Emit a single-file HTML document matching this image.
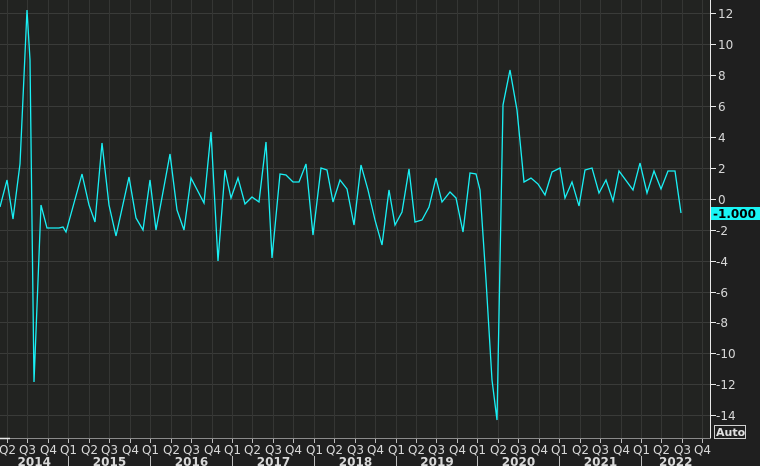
<!DOCTYPE html>
<html><head><meta charset="utf-8"><style>
html,body{margin:0;padding:0;background:#1f1f1f;}
svg{display:block}
text{font-family:"DejaVu Sans","Liberation Sans",sans-serif;}
</style></head><body>
<svg width="760" height="466" viewBox="0 0 760 466" xmlns="http://www.w3.org/2000/svg">
<rect x="0" y="0" width="760" height="466" fill="#1f1f1f"/>
<rect x="0" y="0" width="710" height="438" fill="#222321"/>
<g stroke="#3a3b39" stroke-width="1">
<line x1="0" y1="13.5" x2="710" y2="13.5"/><line x1="0" y1="44.5" x2="710" y2="44.5"/><line x1="0" y1="75.5" x2="710" y2="75.5"/><line x1="0" y1="106.5" x2="710" y2="106.5"/><line x1="0" y1="137.5" x2="710" y2="137.5"/><line x1="0" y1="168.5" x2="710" y2="168.5"/><line x1="0" y1="199.5" x2="710" y2="199.5"/><line x1="0" y1="230.5" x2="710" y2="230.5"/><line x1="0" y1="261.5" x2="710" y2="261.5"/><line x1="0" y1="292.5" x2="710" y2="292.5"/><line x1="0" y1="322.5" x2="710" y2="322.5"/><line x1="0" y1="353.5" x2="710" y2="353.5"/><line x1="0" y1="384.5" x2="710" y2="384.5"/><line x1="0" y1="415.5" x2="710" y2="415.5"/>
</g>
<g id="vg" stroke="#353634" stroke-width="1"></g>
<polyline fill="none" stroke="#19f0f5" stroke-width="1.3" stroke-linejoin="miter" points="0,207 7,180 13,219 20,164 27,10 30,60 34,382 41,205 47,228 59,228 63,227 66,232 82,174 89,205 95,222 102,143 109,205 116,236 129,177 136,218 143,230 150,180 156,230 170,154 177,210 184,230 191,178 204,203 211,132 218,261 225,170 231,198 238,178 245,204 252,197 259,202 266,142 272,258 280,174 286,175 293,182 299,182 306,164 313,235 321,168 327,170 333,202 340,180 347,189 354,225 361,165 368,190 375,220 382,245 389,190 395,225 402,212 409,169 415,222 422,220 429,207 436,178 442,202 450,192 456,198 463,232 470,173 476,174 480,190 486,280 492,380 497,420 503,105 510,70 517,110 524,182 531,178 538,184 545,195 552,172 560,168 565,198 572,182 579,206 585,170 592,168 599,193 606,180 613,201 619,171 633,190 640,163 647,193 654,171 661,189 668,171 675,171 681,213"/>
<line x1="710.5" y1="0" x2="710.5" y2="438" stroke="#e8e8e8" stroke-width="1"/>
<line x1="0" y1="438.5" x2="711" y2="438.5" stroke="#8a8a8a" stroke-width="1"/>
<line x1="0" y1="438.5" x2="10" y2="438.5" stroke="#e8e8e8" stroke-width="1.5"/>
<g stroke="#e8e8e8"><line x1="711" y1="13.5" x2="716" y2="13.5"/><line x1="711" y1="44.5" x2="716" y2="44.5"/><line x1="711" y1="75.5" x2="716" y2="75.5"/><line x1="711" y1="106.5" x2="716" y2="106.5"/><line x1="711" y1="137.5" x2="716" y2="137.5"/><line x1="711" y1="168.5" x2="716" y2="168.5"/><line x1="711" y1="199.5" x2="716" y2="199.5"/><line x1="711" y1="230.5" x2="716" y2="230.5"/><line x1="711" y1="261.5" x2="716" y2="261.5"/><line x1="711" y1="292.5" x2="716" y2="292.5"/><line x1="711" y1="322.5" x2="716" y2="322.5"/><line x1="711" y1="353.5" x2="716" y2="353.5"/><line x1="711" y1="384.5" x2="716" y2="384.5"/><line x1="711" y1="415.5" x2="716" y2="415.5"/></g>
<g fill="#d8d8d8" font-size="12">
<text x="718" y="18">12</text><text x="718" y="49">10</text><text x="718" y="80">8</text><text x="718" y="111">6</text><text x="718" y="142">4</text><text x="718" y="173">2</text><text x="718" y="204">0</text><text x="716" y="235">-2</text><text x="716" y="266">-4</text><text x="716" y="297">-6</text><text x="716" y="327">-8</text><text x="716" y="358">-10</text><text x="716" y="389">-12</text><text x="716" y="420">-14</text>
</g>
<rect x="711" y="207" width="49" height="13" fill="#19f5f5"/>
<text x="713" y="218" font-size="12" font-weight="bold" fill="#000">-1.000</text>
<rect x="714.5" y="425.5" width="31" height="13" fill="none" stroke="#d0d0d0"/>
<text x="716" y="436" font-size="11" font-weight="bold" fill="#e0e0e0">Auto</text>
<g id="qx" fill="#d8d8d8" font-size="12" text-anchor="middle"></g>
<g id="yx" fill="#d8d8d8" font-size="12" font-weight="bold" text-anchor="middle"></g>
<g id="sep" stroke="#bdbdbd"></g>
</svg>
<script>
var ns="http://www.w3.org/2000/svg";
function el(t,a,p,txt){var e=document.createElementNS(ns,t);for(var k in a)e.setAttribute(k,a[k]);if(txt)e.textContent=txt;document.getElementById(p).appendChild(e);}
var q=["Q2","Q3","Q4"];for(var y=0;y<8;y++)q.push("Q1","Q2","Q3","Q4");
for(var i=0;i<q.length;i++){var x=Math.round(7+20.45*i)+0.5;
el("line",{x1:x,y1:0,x2:x,y2:438},"vg");
el("line",{x1:x,y1:439,x2:x,y2:443},"sep");
el("text",{x:x,y:454},"qx",q[i]);}
var seps=[0];for(var k=0;k<8;k++){var sx=Math.round(7+20.45*(3+4*k))+0.5;seps.push(sx);el("line",{x1:sx,y1:456,x2:sx,y2:466},"sep");}
seps.push(710);
for(var k=0;k<9;k++){el("text",{x:(seps[k]+seps[k+1])/2,y:466},"yx",String(2014+k));}
</script>
</body></html>
